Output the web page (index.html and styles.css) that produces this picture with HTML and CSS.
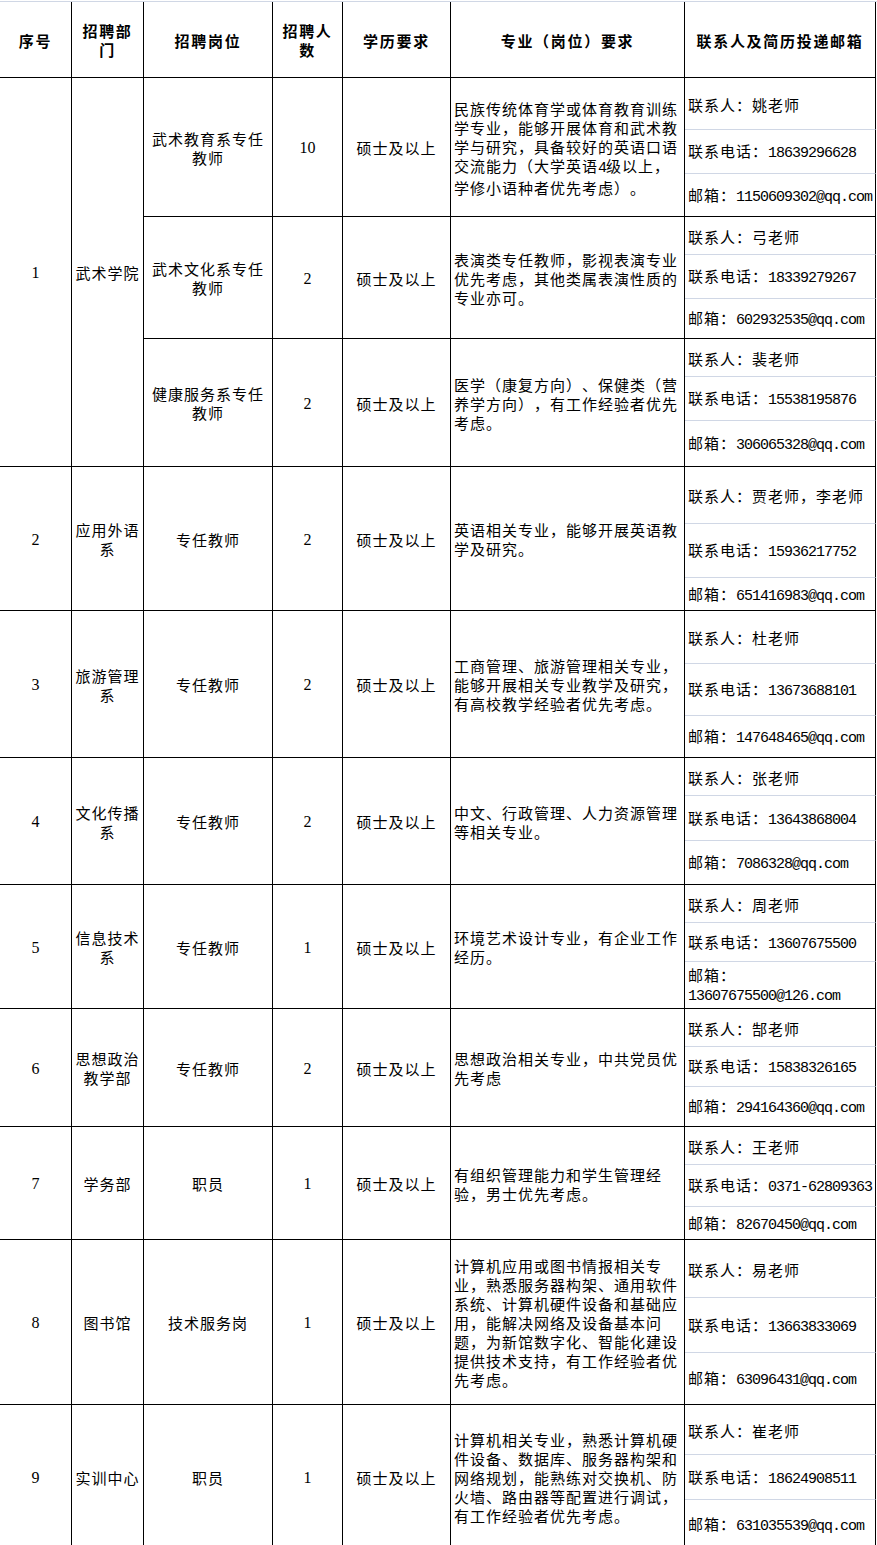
FILE: index.html
```html
<!DOCTYPE html>
<html lang="zh-CN">
<head>
<meta charset="utf-8">
<title>招聘岗位一览表</title>
<link rel="stylesheet" href="styles.css">
</head>
<body>
<div class="sheet">
  <div class="c h"><span>序号</span></div>
  <div class="c h"><span>招聘部<br>门</span></div>
  <div class="c h"><span>招聘岗位</span></div>
  <div class="c h"><span>招聘人<br>数</span></div>
  <div class="c h"><span>学历要求</span></div>
  <div class="c h"><span>专业（岗位）要求</span></div>
  <div class="c h"><span>联系人及简历投递邮箱</span></div>

  <!-- 1 武术学院 -->
  <div class="c ctr num s9"><span>1</span></div>
  <div class="c ctr s9"><span>武术学院</span></div>
  <div class="c ctr s3"><span>武术教育系专任<br>教师</span></div>
  <div class="c ctr num s3"><span>10</span></div>
  <div class="c ctr s3"><span>硕士及以上</span></div>
  <div class="c desc s3"><span>民族传统体育学或体育教育训练<br>学专业，能够开展体育和武术教<br>学与研究，具备较好的英语口语<br>交流能力（大学英语<b class="n">4</b>级以上，<br>学修小语种者优先考虑）。</span></div>
  <div class="c ct sub"><span>联系人：姚老师</span></div>
  <div class="c ct sub"><span>联系电话：<b class="n">18639296628</b></span></div>
  <div class="c ct"><span>邮箱：<b class="n">1150609302@qq.com</b></span></div>

  <div class="c ctr s3"><span>武术文化系专任<br>教师</span></div>
  <div class="c ctr num s3"><span>2</span></div>
  <div class="c ctr s3"><span>硕士及以上</span></div>
  <div class="c desc s3"><span>表演类专任教师，影视表演专业<br>优先考虑，其他类属表演性质的<br>专业亦可。</span></div>
  <div class="c ct sub"><span>联系人：弓老师</span></div>
  <div class="c ct sub"><span>联系电话：<b class="n">18339279267</b></span></div>
  <div class="c ct"><span>邮箱：<b class="n">602932535@qq.com</b></span></div>

  <div class="c ctr s3"><span>健康服务系专任<br>教师</span></div>
  <div class="c ctr num s3"><span>2</span></div>
  <div class="c ctr s3"><span>硕士及以上</span></div>
  <div class="c desc s3"><span>医学（康复方向）、保健类（营<br>养学方向），有工作经验者优先<br>考虑。</span></div>
  <div class="c ct sub"><span>联系人：裴老师</span></div>
  <div class="c ct sub"><span>联系电话：<b class="n">15538195876</b></span></div>
  <div class="c ct"><span>邮箱：<b class="n">306065328@qq.com</b></span></div>

  <!-- 2 应用外语系 -->
  <div class="c ctr num s3"><span>2</span></div>
  <div class="c ctr s3"><span>应用外语<br>系</span></div>
  <div class="c ctr s3"><span>专任教师</span></div>
  <div class="c ctr num s3"><span>2</span></div>
  <div class="c ctr s3"><span>硕士及以上</span></div>
  <div class="c desc s3"><span>英语相关专业，能够开展英语教<br>学及研究。</span></div>
  <div class="c ct sub"><span>联系人：贾老师，李老师</span></div>
  <div class="c ct sub"><span>联系电话：<b class="n">15936217752</b></span></div>
  <div class="c ct"><span>邮箱：<b class="n">651416983@qq.com</b></span></div>

  <!-- 3 旅游管理系 -->
  <div class="c ctr num s3"><span>3</span></div>
  <div class="c ctr s3"><span>旅游管理<br>系</span></div>
  <div class="c ctr s3"><span>专任教师</span></div>
  <div class="c ctr num s3"><span>2</span></div>
  <div class="c ctr s3"><span>硕士及以上</span></div>
  <div class="c desc s3"><span>工商管理、旅游管理相关专业，<br>能够开展相关专业教学及研究，<br>有高校教学经验者优先考虑。</span></div>
  <div class="c ct sub"><span>联系人：杜老师</span></div>
  <div class="c ct sub"><span>联系电话：<b class="n">13673688101</b></span></div>
  <div class="c ct"><span>邮箱：<b class="n">147648465@qq.com</b></span></div>

  <!-- 4 文化传播系 -->
  <div class="c ctr num s3"><span>4</span></div>
  <div class="c ctr s3"><span>文化传播<br>系</span></div>
  <div class="c ctr s3"><span>专任教师</span></div>
  <div class="c ctr num s3"><span>2</span></div>
  <div class="c ctr s3"><span>硕士及以上</span></div>
  <div class="c desc s3"><span>中文、行政管理、人力资源管理<br>等相关专业。</span></div>
  <div class="c ct sub"><span>联系人：张老师</span></div>
  <div class="c ct sub"><span>联系电话：<b class="n">13643868004</b></span></div>
  <div class="c ct"><span>邮箱：<b class="n">7086328@qq.com</b></span></div>

  <!-- 5 信息技术系 -->
  <div class="c ctr num s3"><span>5</span></div>
  <div class="c ctr s3"><span>信息技术<br>系</span></div>
  <div class="c ctr s3"><span>专任教师</span></div>
  <div class="c ctr num s3"><span>1</span></div>
  <div class="c ctr s3"><span>硕士及以上</span></div>
  <div class="c desc s3"><span>环境艺术设计专业，有企业工作<br>经历。</span></div>
  <div class="c ct sub"><span>联系人：周老师</span></div>
  <div class="c ct sub"><span>联系电话：<b class="n">13607675500</b></span></div>
  <div class="c ct"><span>邮箱：<br><b class="n">13607675500@126.com</b></span></div>

  <!-- 6 思想政治教学部 -->
  <div class="c ctr num s3"><span>6</span></div>
  <div class="c ctr s3"><span>思想政治<br>教学部</span></div>
  <div class="c ctr s3"><span>专任教师</span></div>
  <div class="c ctr num s3"><span>2</span></div>
  <div class="c ctr s3"><span>硕士及以上</span></div>
  <div class="c desc s3"><span>思想政治相关专业，中共党员优<br>先考虑</span></div>
  <div class="c ct sub"><span>联系人：郜老师</span></div>
  <div class="c ct sub"><span>联系电话：<b class="n">15838326165</b></span></div>
  <div class="c ct"><span>邮箱：<b class="n">294164360@qq.com</b></span></div>

  <!-- 7 学务部 -->
  <div class="c ctr num s3"><span>7</span></div>
  <div class="c ctr s3"><span>学务部</span></div>
  <div class="c ctr s3"><span>职员</span></div>
  <div class="c ctr num s3"><span>1</span></div>
  <div class="c ctr s3"><span>硕士及以上</span></div>
  <div class="c desc s3"><span>有组织管理能力和学生管理经<br>验，男士优先考虑。</span></div>
  <div class="c ct sub"><span>联系人：王老师</span></div>
  <div class="c ct sub"><span>联系电话：<b class="n">0371-62809363</b></span></div>
  <div class="c ct"><span>邮箱：<b class="n">82670450@qq.com</b></span></div>

  <!-- 8 图书馆 -->
  <div class="c ctr num s3"><span>8</span></div>
  <div class="c ctr s3"><span>图书馆</span></div>
  <div class="c ctr s3"><span>技术服务岗</span></div>
  <div class="c ctr num s3"><span>1</span></div>
  <div class="c ctr s3"><span>硕士及以上</span></div>
  <div class="c desc s3"><span>计算机应用或图书情报相关专<br>业，熟悉服务器构架、通用软件<br>系统、计算机硬件设备和基础应<br>用，能解决网络及设备基本问<br>题，为新馆数字化、智能化建设<br>提供技术支持，有工作经验者优<br>先考虑。</span></div>
  <div class="c ct sub"><span>联系人：易老师</span></div>
  <div class="c ct sub"><span>联系电话：<b class="n">13663833069</b></span></div>
  <div class="c ct"><span>邮箱：<b class="n">63096431@qq.com</b></span></div>

  <!-- 9 实训中心 -->
  <div class="c ctr num s3"><span>9</span></div>
  <div class="c ctr s3"><span>实训中心</span></div>
  <div class="c ctr s3"><span>职员</span></div>
  <div class="c ctr num s3"><span>1</span></div>
  <div class="c ctr s3"><span>硕士及以上</span></div>
  <div class="c desc s3"><span>计算机相关专业，熟悉计算机硬<br>件设备、数据库、服务器构架和<br>网络规划，能熟练对交换机、防<br>火墙、路由器等配置进行调试，<br>有工作经验者优先考虑。</span></div>
  <div class="c ct sub"><span>联系人：崔老师</span></div>
  <div class="c ct sub"><span>联系电话：<b class="n">18624908511</b></span></div>
  <div class="c ct"><span>邮箱：<b class="n">631035539@qq.com</b></span></div>
</div>
</body>
</html>
```

FILE: styles.css
```css
html, body {
  margin: 0;
  padding: 0;
  overflow: hidden;
  background: #fff;
}

body {
  width: 877px;
  font-family: "Noto Sans CJK SC", sans-serif;
  color: #000;
}

.sheet {
  display: grid;
  grid-template-columns: 72px 72px 129px 70px 108px 234px 191px;
  grid-template-rows:
    76px
    52px 44px 43px 38px 44px 40px 38px 44px 46px
    57px 54px 33px
    53px 52px 42px
    38px 45px 44px
    38px 39px 47px
    38px 40px 40px
    38px 42px 33px
    58px 55px 52px
    50px 45px 50px;
  margin-top: 1px;
  border-top: 1px solid #d0d7e5;
}

.c {
  box-sizing: border-box;
  display: flex;
  align-items: center;
  min-width: 0;
  overflow: hidden;
  padding: 1px 0 0 0;
  border-right: 1px solid #000;
  border-bottom: 1px solid #000;
  font-size: 15px;
  line-height: 19px;
  letter-spacing: 1px;
  white-space: nowrap;
  text-spacing-trim: space-all;
}

.h {
  justify-content: center;
  text-align: center;
  font-weight: 700;
  letter-spacing: 1.7px;
}

.ctr {
  justify-content: center;
  text-align: center;
}

.desc {
  padding-left: 3px;
}

.ct {
  padding-left: 3px;
}

.ct.sub {
  border-bottom-color: #d0d7e5;
}

.num {
  font-family: "Liberation Serif", serif;
  font-size: 16px;
  letter-spacing: 0;
}

.n {
  font-weight: 400;
  font-family: "Liberation Mono", monospace;
  font-size: 15px;
  letter-spacing: -1px;
}

.s3 {
  grid-row: span 3;
}

.s9 {
  grid-row: span 9;
}
```
